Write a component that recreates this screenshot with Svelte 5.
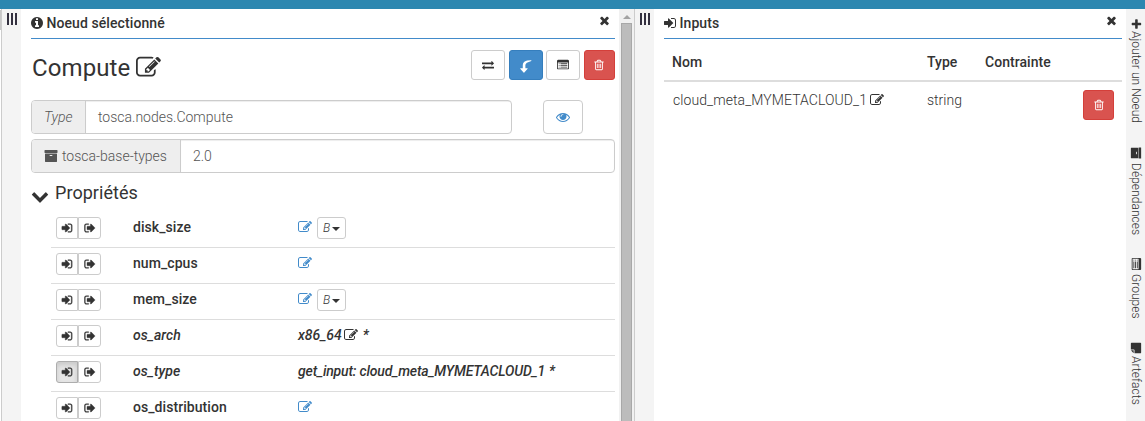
<script>
  const icons = {
    info: 'M1152 1376v-160q0-14-9-23t-23-9h-96v-512q0-14-9-23t-23-9h-320q-14 0-23 9t-9 23v160q0 14 9 23t23 9h96v320h-96q-14 0-23 9t-9 23v160q0 14 9 23t23 9h448q14 0 23-9t9-23zm-128-896v-160q0-14-9-23t-23-9h-192q-14 0-23 9t-9 23v160q0 14 9 23t23 9h192q14 0 23-9t9-23zm640 416q0 209-103 385.5t-279.5 279.5-385.5 103-385.5-103-279.5-279.5-103-385.5 103-385.5 279.5-279.5 385.5-103 385.5 103 279.5 279.5 103 385.5z',
    times: 'M1490 1322q0 40-28 68l-136 136q-28 28-68 28t-68-28l-294-294-294 294q-28 28-68 28t-68-28l-136-136q-28-28-28-68t28-68l294-294-294-294q-28-28-28-68t28-68l136-136q28-28 68-28t68 28l294 294 294-294q28-28 68-28t68 28l136 136q28 28 28 68t-28 68l-294 294 294 294q28 28 28 68z',
    edit: 'M888 1184l116-116-152-152-116 116v56h96v96h56zm440-720q-16-16-33 1l-350 350q-17 17-1 33t33-1l350-350q17-17 1-33zm80 594v190q0 119-84.5 203.5t-203.5 84.5h-832q-119 0-203.5-84.5t-84.5-203.5v-832q0-119 84.5-203.5t203.5-84.5h832q63 0 117 25 15 7 18 23 3 17-9 29l-49 49q-14 14-32 8-23-6-45-6h-832q-66 0-113 47t-47 113v832q0 66 47 113t113 47h832q66 0 113-47t47-113v-126q0-13 9-22l64-64q15-15 35-7t20 29zm-96-738l288 288-672 672h-288v-288zm444 132l-92 92-288-288 92-92q28-28 68-28t68 28l152 152q28 28 28 68t-28 68z',
    exchange: 'M1792 1184v192q0 13-9.500 22.500t-22.500 9.500h-1376v192q0 13-9.500 22.500t-22.500 9.500q-12 0-24-10l-319-320q-9-9-9-22 0-14 9-23l320-320q9-9 23-9 13 0 22.500 9.500t9.500 22.500v192h1376q13 0 22.500 9.500t9.500 22.500zm0-544q0 14-9 23l-320 320q-9 9-23 9-13 0-22.500-9.500t-9.500-22.500v-192h-1376q-13 0-22.500-9.500t-9.500-22.500v-192q0-13 9.500-22.500t22.500-9.500h1376v-192q0-14 9-23t23-9q12 0 24 10l319 319q9 9 9 23z',
    turn: 'M1700 40q-1180-40-1180 660v420h-300q-90 0-50 80l460 540q50 50 100 0l460-540q40-80-50-80h-260v-420q0-330 820-560z',
    list: 'M384 1184v64q0 13-9.500 22.500t-22.500 9.500h-64q-13 0-22.500-9.500t-9.500-22.500v-64q0-13 9.500-22.500t22.500-9.500h64q13 0 22.500 9.500t9.500 22.500zm0-256v64q0 13-9.500 22.500t-22.500 9.500h-64q-13 0-22.500-9.500t-9.500-22.500v-64q0-13 9.500-22.500t22.500-9.500h64q13 0 22.500 9.500t9.500 22.500zm0-256v64q0 13-9.500 22.500t-22.500 9.500h-64q-13 0-22.500-9.500t-9.500-22.500v-64q0-13 9.500-22.500t22.500-9.500h64q13 0 22.500 9.500t9.500 22.500zm1152 512v64q0 13-9.500 22.500t-22.500 9.500h-960q-13 0-22.500-9.500t-9.500-22.500v-64q0-13 9.500-22.500t22.500-9.500h960q13 0 22.500 9.500t9.500 22.500zm0-256v64q0 13-9.500 22.500t-22.500 9.500h-960q-13 0-22.500-9.500t-9.500-22.500v-64q0-13 9.500-22.500t22.500-9.500h960q13 0 22.500 9.500t9.500 22.500zm0-256v64q0 13-9.500 22.500t-22.500 9.500h-960q-13 0-22.500-9.500t-9.500-22.500v-64q0-13 9.500-22.500t22.500-9.500h960q13 0 22.500 9.500t9.500 22.500zm128 704v-832q0-13-9.500-22.500t-22.500-9.500h-1472q-13 0-22.500 9.500t-9.500 22.500v832q0 13 9.500 22.500t22.500 9.500h1472q13 0 22.500-9.500t9.500-22.500zm128-1088v1088q0 66-47 113t-113 47h-1472q-66 0-113-47t-47-113v-1088q0-66 47-113t113-47h1472q66 0 113 47t47 113z',
    trash: 'M704 736v576q0 14-9 23t-23 9h-64q-14 0-23-9t-9-23v-576q0-14 9-23t23-9h64q14 0 23 9t9 23zm256 0v576q0 14-9 23t-23 9h-64q-14 0-23-9t-9-23v-576q0-14 9-23t23-9h64q14 0 23 9t9 23zm256 0v576q0 14-9 23t-23 9h-64q-14 0-23-9t-9-23v-576q0-14 9-23t23-9h64q14 0 23 9t9 23zm128 724v-948h-896v948q0 22 7 40.5t14.5 27 10.5 8.5h832q3 0 10.5-8.5t14.5-27 7-40.5zm-672-1076h448l-48-117q-7-9-17-11h-317q-10 2-17 11zm928 32v64q0 14-9 23t-23 9h-96v948q0 83-47 143.5t-113 60.5h-832q-66 0-113-58.5t-47-141.5v-952h-96q-14 0-23-9t-9-23v-64q0-14 9-23t23-9h309l70-167q15-37 54-63t79-26h320q40 0 79 26t54 63l70 167h309q14 0 23 9t9 23z',
    eye: 'M1664 960q-152-236-381-353 61 104 61 225 0 185-131.5 316.5t-316.5 131.5-316.5-131.5-131.5-316.5q0-121 61-225-229 117-381 353 133 205 333.5 326.5t434.5 121.5 434.5-121.5 333.5-326.5zm-720-384q0-20-14-34t-34-14q-125 0-214.5 89.5t-89.5 214.5q0 20 14 34t34 14 34-14 14-34q0-86 61-147t147-61q20 0 34-14t14-34zm848 384q0 34-20 69-140 230-376.5 368.5t-499.5 138.5-499.5-139-376.5-368q-20-35-20-69t20-69q140-229 376.500-368t499.500-139 499.500 139 376.500 368q20 35 20 69z',
    archive: 'M1088 832q0-26-19-45t-45-19h-256q-26 0-45 19t-19 45 19 45 45 19h256q26 0 45-19t19-45zm576-192v960q0 26-19 45t-45 19h-1408q-26 0-45-19t-19-45v-960q0-26 19-45t45-19h1408q26 0 45 19t19 45zm64-448v256q0 26-19 45t-45 19h-1536q-26 0-45-19t-19-45v-256q0-26 19-45t45-19h1536q26 0 45 19t19 45z',
    chevron: 'M1683 808l-742 741q-19 19-45 19t-45-19l-742-741q-19-19-19-45.5t19-45.5l166-165q19-19 45-19t45 19l531 531 531-531q19-19 45-19t45 19l166 165q19 19 19 45.5t-19 45.5z',
    signin: 'M1312 896q0 26-19 45l-544 544q-19 19-45 19t-45-19-19-45v-288h-448q-26 0-45-19t-19-45v-384q0-26 19-45t45-19h448v-288q0-26 19-45t45-19 45 19l544 544q19 19 19 45zm352-352v704q0 119-84.5 203.5t-203.5 84.5h-320q-13 0-22.5-9.5t-9.5-22.5q0-4-1-20t-.5-26.5 3-23.5 10-19.5 20.500-6.500h320q66 0 113-47t47-113v-704q0-66-47-113t-113-47h-312l-11.500-1-11.500-3-8-5.500-7-9-2-13.500q0-4-1-20t-.5-26.500 3-23.500 10-19.500 20.500-6.500h320q119 0 203.500 84.500t84.500 203.500z',
    signout: 'M704 1440q0 4 1 20t.5 26.500-3 23.500-10 19.500-20.500 6.500h-320q-119 0-203.500-84.500t-84.500-203.500v-704q0-119 84.500-203.500t203.500-84.500h320q13 0 22.500 9.500t9.500 22.500q0 4 1 20t.5 26.500-3 23.500-10 19.500-20.500 6.500h-320q-66 0-113 47t-47 113v704q0 66 47 113t113 47h312l11.500 1 11.500 3 8 5.500 7 9 2 13.500zm928-544q0 26-19 45l-544 544q-19 19-45 19t-45-19-19-45v-288h-448q-26 0-45-19t-19-45v-384q0-26 19-45t45-19h448v-288q0-26 19-45t45-19 45 19l544 544q19 19 19 45z',
    plus: 'M1600 736v192q0 40-28 68t-68 28h-416v416q0 40-28 68t-68 28h-192q-40 0-68-28t-28-68v-416h-416q-40 0-68-28t-28-68v-192q0-40 28-68t68-28h416v-416q0-40 28-68t68-28h192q40 0 68 28t28 68v416h416q40 0 68 28t28 68z',
    note: 'M1664 1120H1216q-40 0-68 28t-28 68v448H224q-40 0-68-28t-28-68V224q0-40 28-68t68-28h1344q40 0 68 28t28 68zM1248 1248h380q-10 50-36 76l-268 268q-26 26-76 36z'
  };

  const properties = [
    { name: 'disk_size', unit: 'B' },
    { name: 'num_cpus' },
    { name: 'mem_size', unit: 'B' },
    { name: 'os_arch', value: 'x86_64', required: true, editable: true },
    { name: 'os_type', value: 'get_input: cloud_meta_MYMETACLOUD_1', required: true, linked: true },
    { name: 'os_distribution' }
  ];

  const tabs = [
    { label: 'Ajouter un Noeud', icon: 'plus', length: 129, gap: 1 },
    { label: 'Dépendances', icon: 'archive', length: 111, gap: 4 },
    { label: 'Groupes', icon: 'list', length: 84, gap: 4 },
    { label: 'Artefacts', icon: 'note', length: 70, gap: 2 }
  ];
</script>

{#snippet icon(name, size = 14)}
  <svg class="icon {name}" width={size} height={size} viewBox="0 0 1792 1792" aria-hidden="true"><path d={icons[name]} /></svg>
{/snippet}

<div class="app">
  <div class="topbar"></div>
  <main>
    <div class="gutter"><i></i></div>
    <div class="handle"><i></i><i></i><i></i></div>

    <section class="panel node">
      <header>
        <span class="title">{@render icon('info')}Noeud sélectionné</span>
        {@render icon('times', 13)}
      </header>

      <div class="heading">
        <h2>Compute {@render icon('edit', 25)}</h2>
        <div class="actions">
          <button class="btn">{@render icon('exchange', 12)}</button>
          <button class="btn primary">{@render icon('turn', 13)}</button>
          <button class="btn">{@render icon('list', 12)}</button>
          <button class="btn danger">{@render icon('trash', 12)}</button>
        </div>
      </div>

      <div class="fields">
        <div class="line">
          <div class="group type"><span class="addon"><em>Type</em></span><span class="input">tosca.nodes.Compute</span></div>
          <button class="btn view">{@render icon('eye')}</button>
        </div>
        <div class="group"><span class="addon archive-name">{@render icon('archive')}tosca-base-types</span><span class="input">2.0</span></div>
      </div>

      <h3>{@render icon('chevron', 18)}Propriétés</h3>
      <ul>
        {#each properties as p}
          <li class:set={p.value}>
            <div class="pair">
              <button class="mini" class:active={p.linked}>{@render icon('signin', 12)}</button>
              <button class="mini">{@render icon('signout', 12)}</button>
            </div>
            <span class="name">{p.name}</span>
            <span class="value">
              {#if p.value}
                <span class:reference={p.linked}>{p.value}</span>
                {#if p.editable}{@render icon('edit')}{/if}
                <span class="star">*</span>
              {:else}
                <span class="blue">{@render icon('edit')}</span>
                {#if p.unit}<button class="unit"><em>{p.unit}</em><i></i></button>{/if}
              {/if}
            </span>
          </li>
        {/each}
      </ul>
    </section>

    <div class="scroll"><span class="up"></span><span class="thumb"></span></div>
    <div class="handle second"><i></i><i></i><i></i></div>

    <section class="panel inputs">
      <header>
        <span class="title">{@render icon('signin')}Inputs</span>
        {@render icon('times', 13)}
      </header>
      <div class="trow thead"><span>Nom</span><span>Type</span><span>Contrainte</span></div>
      <div class="trow tbody">
        <span class="cell">cloud_meta_MYMETACLOUD_1{@render icon('edit')}</span>
        <span>string</span>
        <span></span>
        <button class="btn danger">{@render icon('trash', 12)}</button>
      </div>
    </section>

    <nav>
      {#each tabs as t}
        <div class="tab" style="height: {t.length}px; gap: {t.gap}px">{@render icon(t.icon, 12)}<span>{t.label}</span></div>
      {/each}
    </nav>
  </main>
</div>

<style>
  :global(body) { overflow: hidden; background: #fff; }
  .app {
    height: 421px;
    overflow: hidden;
    font: 300 14px/20px Roboto, sans-serif;
    color: #333;
  }
  .app * { box-sizing: border-box; }
  .topbar { height: 9px; background: #2c87b0; }
  main { display: grid; grid-template-columns: 1px 20px 598px 15px 20px 472px 19px; height: 412px; }
  .icon { display: block; flex: none; fill: currentColor; }
  button { font: inherit; color: inherit; padding: 0; margin: 0; }

  .gutter i { display: block; height: 20px; margin-top: 1px; background: #c8c8c8; }
  .handle { display: flex; gap: 2px; padding: 4px 0 0 5px; border-left: 1px solid #ccc; background: #f4f4f4; }
  .handle i { width: 2px; height: 12px; background: #33303f; }

  .panel { padding: 0 4px 0 10px; overflow: hidden; min-width: 0; }
  header {
    display: flex;
    justify-content: space-between;
    height: 30px;
    padding: 4px 4px 0 0;
    border-bottom: 1px solid #428bca;
    font-weight: 500;
  }
  .title { display: flex; gap: 2.5px; letter-spacing: 0.08px; }
  .title .icon { margin-top: 3px; margin-left: -1px; }
  header > .icon { margin-top: 1px; }

  .heading { display: flex; justify-content: space-between; height: 61px; padding-top: 11px; }
  h2 { display: flex; gap: 6px; margin: 2px 0 0 1px; font-size: 24px; line-height: 32px; font-weight: 400; height: 32px; letter-spacing: 0.1px; }
  h2 .icon { margin-top: 3px; }
  .actions { display: grid; grid-template-columns: 34px 34px 34px 31px; column-gap: 3.67px; width: 144px; }
  .btn {
    display: flex;
    align-items: center;
    justify-content: center;
    height: 30px;
    border: 1px solid #ccc;
    border-radius: 3px;
    background: #fff;
  }
  .primary { background: #428bca; border-color: #357ebd; color: #fff; }
  .primary .icon { margin-top: 3px; }
  .danger { background: #d9534f; border-color: #d43f3a; color: #fff; }

  .fields { display: flex; flex-direction: column; gap: 5px; }
  .line { display: flex; gap: 31px; }
  .group { display: flex; height: 34px; border: 1px solid #ccc; border-radius: 4px; overflow: hidden; color: #555; line-height: 32px; }
  .type { width: 481px; }
  .addon { display: flex; padding: 0 12px; background: #eee; border-right: 1px solid #ccc; }
  .type .addon { width: 54px; }
  .archive-name { width: 149px; gap: 4px; white-space: nowrap; }
  .archive-name .icon { margin-top: 9px; }
  .input { flex: 1; padding-left: 12px; box-shadow: inset 0 1px 1px rgba(0, 0, 0, 0.075); }
  .view { width: 40px; height: 34px; border-radius: 4px; color: #428bca; }

  h3 { display: flex; gap: 6px; height: 20px; margin: 10px 0 9px; font-size: 18px; line-height: 20px; font-weight: 400; letter-spacing: 0.05px; }
  h3 .icon { margin-top: 4px; }
  ul { list-style: none; margin: 0 0 0 20px; padding: 0; }
  li { display: grid; grid-template-columns: 82px 164px 1fr; height: 36px; padding-top: 5px; border-bottom: 1px solid #ddd; font-weight: 500; }
  .name { letter-spacing: 0.06px; }
  .set { font-style: italic; }
  .pair { display: flex; padding-left: 5px; }
  .pair .icon { stroke: currentColor; stroke-width: 60; }
  .mini, .unit {
    display: flex;
    align-items: center;
    justify-content: center;
    width: 22px;
    height: 22px;
    border: 1px solid #ccc;
    border-radius: 3px;
    background: #fff;
  }
  .mini:first-child { border-radius: 3px 0 0 3px; }
  .mini:last-child { width: 23px; border-radius: 0 3px 3px 0; }
  .mini.active { background: #e6e6e6; border-color: #adadad; box-shadow: inset 0 3px 5px rgba(0, 0, 0, 0.125); }
  .value { display: flex; white-space: nowrap; padding-left: 1px; }
  .value .icon { margin: 3px 0 0 2px; }
  .value .blue .icon { margin-left: 0; }
  .reference { letter-spacing: -0.165px; }
  .blue { color: #428bca; }
  .star { margin-left: 5px; }
  .reference + .star { margin-left: 4px; }
  .unit { width: 29px; margin-left: 5px; gap: 2px; font-size: 12px; font-weight: 300; }
  .unit i { margin-top: 2px; border: 4px solid transparent; border-top-color: #333; border-bottom: 0; }

  .scroll { display: flex; flex-direction: column; align-items: center; background: #f1f1f1; padding: 6px 0 0 1px; }
  .up { border: 4px solid transparent; border-top: 0; border-bottom-color: #a3a3a3; }
  .thumb { flex: 1; width: 11px; margin-top: 4px; margin-right: 1px; background: #bcbcbc; border: 1px solid #a8a8a8; border-bottom: 0; }

  .trow { display: grid; grid-template-columns: 255px 58px 98px 31px; padding-left: 8px; }
  .thead { height: 43px; padding-top: 13px; border-bottom: 2px solid #ddd; font-weight: 500; letter-spacing: 0.04px; }
  .tbody { padding-top: 8px; }
  .tbody .cell { display: flex; gap: 3px; padding-left: 1px; letter-spacing: 0.08px; }
  .cell .icon { margin-top: 3px; }

  nav { background: #f4f4f4; padding-top: 9px; }
  .tab { display: flex; flex-direction: column; align-items: center; font-size: 12px; line-height: 19px; }
  .tab .icon { transform: rotate(90deg); }
  .tab span { writing-mode: vertical-rl; white-space: nowrap; letter-spacing: 0.04px; }
</style>
